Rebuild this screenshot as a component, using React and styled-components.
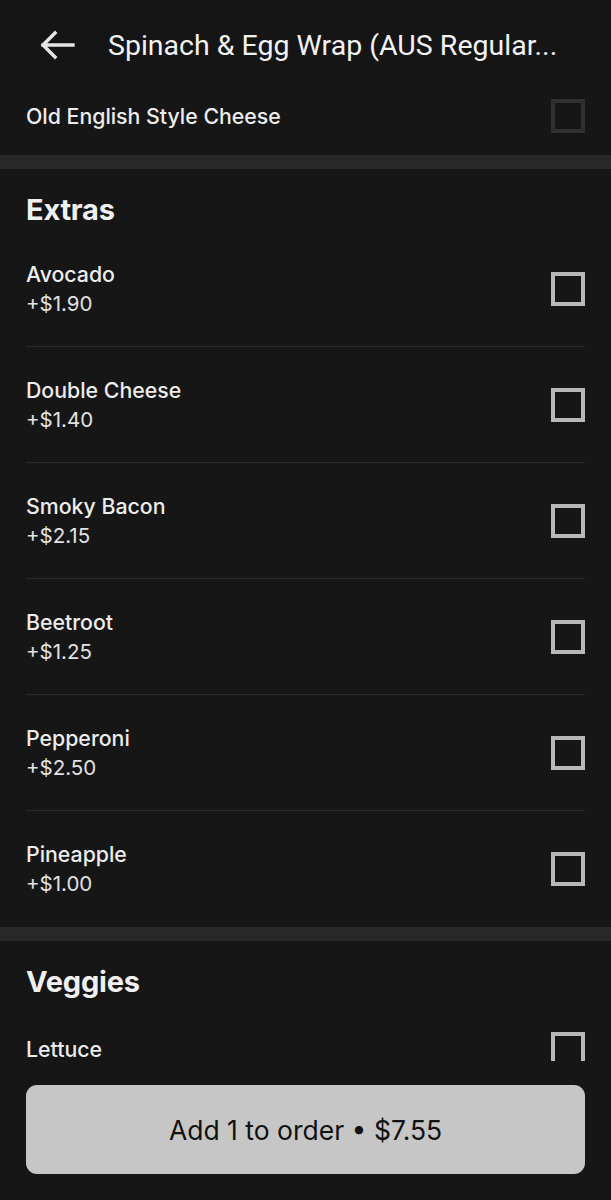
import React from "react";
import styled, { createGlobalStyle } from "styled-components";

const GlobalStyle = createGlobalStyle`
  html, body {
    margin: 0;
    padding: 0;
    background: #161616;
  }
  * { box-sizing: border-box; }
`;

const Page = styled.div`
  position: relative;
  width: 611px;
  height: 1200px;
  overflow: hidden;
  background: #161616;
  font-family: Inter, Roboto, "Liberation Sans", sans-serif;
  color: #ececec;
`;

const Header = styled.header`
  height: 90px;
  display: flex;
  align-items: center;
  padding: 0 0 0 38px;
  background: #151515;
`;

const BackButton = styled.button`
  border: none;
  background: none;
  padding: 0;
  width: 38px;
  height: 38px;
  display: flex;
  align-items: center;
  justify-content: center;
  color: #e6e6e6;
  cursor: pointer;
`;

const Title = styled.h1`
  margin: 0 0 0 32px;
  font-family: Roboto, "Liberation Sans", sans-serif;
  font-size: 28.5px;
  font-weight: 400;
  color: #f2f2f2;
  white-space: nowrap;
  overflow: hidden;
`;

const OptionRow = styled.label`
  display: flex;
  align-items: center;
  justify-content: space-between;
  margin: 0 26px;
  height: ${(p) => p.$height || 116}px;
  padding-bottom: ${(p) => p.$shift || 0}px;
  border-bottom: ${(p) => (p.$divider ? "1px solid #2b2b2b" : "none")};
  cursor: pointer;
`;

const OptionText = styled.div`
  display: flex;
  flex-direction: column;
`;

const OptionName = styled.span`
  font-size: 21.3px;
  line-height: 30px;
  font-weight: 500;
  color: #ececec;
`;

const OptionPrice = styled.span`
  font-size: 20.5px;
  line-height: 30px;
  color: #e2e2e2;
`;

const Checkbox = styled.span`
  width: 34px;
  height: 34px;
  border: 4px solid ${(p) => (p.$disabled ? "#303030" : "#b8b8b8")};
  background: #161616;
  flex-shrink: 0;
`;

const SectionBand = styled.div`
  height: 14px;
  background: #282828;
`;

const SectionTitle = styled.h2`
  margin: 0;
  padding: ${(p) => p.$top || 24}px 26px ${(p) => p.$bottom || 0}px;
  font-family: Inter, "Open Sans", sans-serif;
  font-size: 29px;
  line-height: 34px;
  font-weight: 700;
  letter-spacing: -0.2px;
  color: #f0f0f0;
`;

const Footer = styled.div`
  position: absolute;
  left: 0;
  right: 0;
  bottom: 0;
  height: 139px;
  padding: 24px 26px 0;
  background: #161616;
`;

const AddButton = styled.button`
  width: 100%;
  height: 89px;
  border: none;
  border-radius: 11px;
  background: #c6c6c6;
  color: #111111;
  font-family: Inter, Roboto, "Liberation Sans", sans-serif;
  font-size: 26.5px;
  cursor: pointer;
`;

const extras = [
  { name: "Avocado", price: "+$1.90" },
  { name: "Double Cheese", price: "+$1.40" },
  { name: "Smoky Bacon", price: "+$2.15" },
  { name: "Beetroot", price: "+$1.25" },
  { name: "Pepperoni", price: "+$2.50" },
  { name: "Pineapple", price: "+$1.00" },
];

const BackArrow = () => (
  <svg width="36" height="30" viewBox="0 0 36 30" fill="none">
    <path
      d="M34 15H4M16 3L4 15L16 27"
      stroke="currentColor"
      strokeWidth="3.4"
      strokeLinecap="square"
      strokeLinejoin="miter"
    />
  </svg>
);

const App = () => {
  return (
    <Page>
      <GlobalStyle />
      <Header>
        <BackButton aria-label="Back">
          <BackArrow />
        </BackButton>
        <Title>Spinach &amp; Egg Wrap (AUS Regular...</Title>
      </Header>

      <OptionRow $height={65} $shift={14}>
        <OptionName>Old English Style Cheese</OptionName>
        <Checkbox $disabled />
      </OptionRow>

      <SectionBand />
      <SectionTitle $bottom={4}>Extras</SectionTitle>
      {extras.map((item, i) => (
        <OptionRow key={item.name} $divider={i < extras.length - 1}>
          <OptionText>
            <OptionName>{item.name}</OptionName>
            <OptionPrice>{item.price}</OptionPrice>
          </OptionText>
          <Checkbox />
        </OptionRow>
      ))}

      <SectionBand />
      <SectionTitle $top={24} $bottom={4}>Veggies</SectionTitle>
      <OptionRow $height={92}>
        <OptionName>Lettuce</OptionName>
        <Checkbox />
      </OptionRow>

      <Footer>
        <AddButton>Add 1 to order • $7.55</AddButton>
      </Footer>
    </Page>
  );
};

export default App;
